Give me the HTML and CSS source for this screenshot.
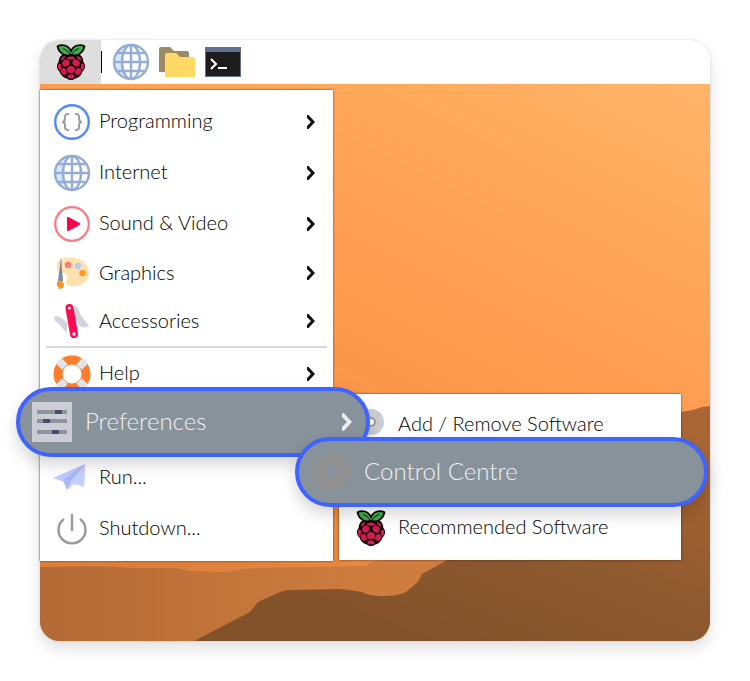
FILE: index.html
```html
<!DOCTYPE html>
<html lang="en">
<head>
  <meta charset="UTF-8" />
  <meta name="viewport" content="width=device-width, initial-scale=1" />
  <title>Control Centre</title>
  <link rel="stylesheet" href="styles.css">
</head>
<body>
  <!-- shared icons -->
  <svg class="sprite" aria-hidden="true">
    <symbol id="raspberry" viewBox="0 0 32 40">
      <path d="M16 9C12 8 9 9 7 12C4 14 3 17 3 20C0 23 1 28 4 30C5 34 9 37 12 37.500C14 39.500 18 39.500 20 37.500C24 37 27 34 28 30C31 28 32 23 29 20C29 17 28 14 25 12C23 9 20 8 16 9Z" fill="#0b0205"/>
      <path d="M15.500 12.500C9 14.500 3 10 1.800 3.500C6 1 14 2 16 9C18 2 26 1 30.200 3.500C29 10 23 14.500 16.500 12.500Z" fill="#3fae49" stroke="#0b0205" stroke-width="1.800" stroke-linejoin="round"/>
      <path d="M8 6C11 7 13 9 15.500 12M24 6C21 7 19 9 16.500 12" fill="none" stroke="#0b0205" stroke-width="1"/>
      <g fill="#d01c50">
        <path d="M11.500 16.200C13 13.500 19 13.500 20.500 16.200C18 18 14 18 11.500 16.200Z"/>
        <path d="M5 18.500C5 16 7 14 9.500 13.800C10.500 15.500 8 18.500 5 18.500Z"/>
        <path d="M27 18.500C27 16 25 14 22.500 13.800C21.500 15.500 24 18.500 27 18.500Z"/>
        <ellipse cx="10.600" cy="21" rx="4" ry="3.500" transform="rotate(-35 10.600 21)"/>
        <ellipse cx="21.400" cy="21" rx="4" ry="3.500" transform="rotate(35 21.400 21)"/>
        <ellipse cx="16" cy="28" rx="4.200" ry="3.800"/>
        <ellipse cx="3.900" cy="25" rx="1.800" ry="3.300"/>
        <ellipse cx="28.100" cy="25" rx="1.800" ry="3.300"/>
        <ellipse cx="8.400" cy="30" rx="3.100" ry="3.700" transform="rotate(-30 8.400 30)"/>
        <ellipse cx="23.600" cy="30" rx="3.100" ry="3.700" transform="rotate(30 23.600 30)"/>
        <ellipse cx="16" cy="35.200" rx="3.800" ry="2.200"/>
      </g>
    </symbol>
    <symbol id="globe" viewBox="0 0 38 38">
      <circle cx="19" cy="19" r="17" fill="#fff"/>
      <path d="M19 2A17 17 0 0 0 19 36C8 30 8 8 19 2Z" fill="#d8e8fb"/>
      <g fill="none" stroke="#94acd6" stroke-width="2.400">
        <circle cx="19" cy="19" r="17"/>
        <ellipse cx="19" cy="19" rx="9" ry="17"/>
        <path d="M19 2V36M2 19H36M5 10H33M5 28H33"/>
      </g>
    </symbol>
    <symbol id="chevron" viewBox="0 0 8 14">
      <path d="M0 0H1.500L8 7L1.500 14H0V11L4 7L0 3Z" fill="currentColor"/>
    </symbol>
  </svg>

  <main class="desktop">
    <header class="taskbar">
      <button class="task start" aria-label="Menu"><svg class="berry"><use href="#raspberry"/></svg></button>
      <span class="cursor"></span>
      <button class="task" aria-label="Web browser"><svg class="icon"><use href="#globe"/></svg></button>
      <button class="task" aria-label="Files">
        <svg class="icon" viewBox="0 0 38 38">
          <path d="M1 6Q1 4 3 4H12L16 8H29Q31 8 31 10V29H1Z" fill="#9c8c66"/>
          <path d="M7 12Q7 10 9 10H18L22 14H35Q37 14 37 16V34H7Z" fill="#ffd966"/>
        </svg>
      </button>
      <button class="task" aria-label="Terminal">
        <svg class="icon" viewBox="0 0 38 38">
          <path d="M1 4H37V34H1Z" fill="#61718f"/>
          <path d="M2 9H36V33H2Z" fill="#1d1d1d"/>
          <path d="M7 16L12 21L7 26M14 25H23" fill="none" stroke="#fff" stroke-width="2"/>
        </svg>
      </button>
    </header>

    <div class="wallpaper">
      <svg class="scenery" viewBox="0 0 670 557" preserveAspectRatio="none" aria-hidden="true">
        <defs>
          <linearGradient id="sky" x1="1" y1="0" x2="0.400" y2="1">
            <stop offset="0" stop-color="#ffb46a"/>
            <stop offset="0.200" stop-color="#feab5b"/>
            <stop offset="0.400" stop-color="#ff9f53"/>
            <stop offset="0.650" stop-color="#fa9549"/>
            <stop offset="1" stop-color="#dd7f3b"/>
          </linearGradient>
          <linearGradient id="ridge">
            <stop offset="0" stop-color="#b36a36"/>
            <stop offset="0.800" stop-color="#cf7d3e"/>
          </linearGradient>
          <linearGradient id="hill" x1="0.300" y1="1" x2="1" y2="0.200">
            <stop offset="0" stop-color="#82522b"/>
            <stop offset="0.500" stop-color="#8d592f"/>
            <stop offset="1" stop-color="#a96534"/>
          </linearGradient>
        </defs>
        <path d="M0 0H670V557H0Z" fill="url(#sky)"/>
        <path d="M0 483L58 482L95 484L137 484L150 487L185 488L213 484L326 482L333 477L420 470V557H0Z" fill="url(#ridge)"/>
        <path d="M154 557L210 528L218 518L240 508L247 506L302 505L322 508Q328 512 343 512Q358 512 366 508L378 498L382 490L407 476L500 400L641 328L653 326L662 323L670 322V557Z" fill="url(#hill)"/>
      </svg>

      <nav class="menu" aria-label="Applications">
        <ul class="list">
          <li><a href="#programming" class="row">
            <svg class="icon" viewBox="0 0 38 38">
              <circle cx="19" cy="19" r="16.800" fill="#fff" stroke="#548bfb" stroke-width="2.400"/>
              <path d="M16 11H15Q12 11 12 14V16Q12 19 9 19Q12 19 12 22V24Q12 27 15 27H16M22 11H23Q26 11 26 14V16Q26 19 29 19Q26 19 26 22V24Q26 27 23 27H22" fill="none" stroke="#9b9fa6" stroke-width="2"/>
            </svg>
            <span class="label">Programming</span><svg class="chevron"><use href="#chevron"/></svg></a></li>
          <li><a href="#internet" class="row">
            <svg class="icon"><use href="#globe"/></svg>
            <span class="label">Internet</span><svg class="chevron"><use href="#chevron"/></svg></a></li>
          <li><a href="#sound" class="row">
            <svg class="icon" viewBox="0 0 38 38">
              <circle cx="19" cy="19" r="16.800" fill="#fff" stroke="#fb7b80" stroke-width="2.200"/>
              <path d="M15 13L26 19L15 25Z" fill="#ff004e" stroke="#ff004e" stroke-width="2" stroke-linejoin="round"/>
            </svg>
            <span class="label">Sound &amp; Video</span><svg class="chevron"><use href="#chevron"/></svg></a></li>
          <li><a href="#graphics" class="row short">
            <svg class="icon" viewBox="0 0 38 38">
              <path d="M8 5C17 1 36 4 36 19C36 29 27 33 18 32C12 31 12 28 14 25C16 21 11 18 8 19C2 16 2 8 8 5Z" fill="#ffe1ad"/>
              <circle cx="15" cy="11" r="3.200" fill="#f87c80"/>
              <circle cx="25" cy="12" r="3.200" fill="#b5ccf6"/>
              <circle cx="29.500" cy="19" r="3.200" fill="#ff9a28"/>
              <path d="M8 3L10 27H5Z" fill="#7c8ba3"/>
              <path d="M4 28Q7 25 10 28L11 31Q10 35 6 35Q6 33 4 32Z" fill="#ff9122"/>
            </svg>
            <span class="label">Graphics</span><svg class="chevron"><use href="#chevron"/></svg></a></li>
          <li><a href="#accessories" class="row short">
            <svg class="icon" viewBox="0 0 38 38">
              <path d="M1 15L5 14L14 20V31L6 22L2 19ZM22 3Q26 6 27 12L36 24Q31 27 27 24L20 15Z" fill="#d2d4dc"/>
              <path d="M16.500 6L21 32" stroke="#ff0950" stroke-width="8" stroke-linecap="round"/>
              <circle cx="16.500" cy="6" r="1.500" fill="#fff"/>
              <circle cx="21" cy="32" r="1.700" fill="#fff"/>
            </svg>
            <span class="label">Accessories</span><svg class="chevron"><use href="#chevron"/></svg></a></li>
          <li class="separator"></li>
          <li><a href="#help" class="row">
            <svg class="icon" viewBox="0 0 38 38">
              <circle cx="19" cy="19" r="14" fill="none" stroke="#ff7d2b" stroke-width="9"/>
              <path d="M6 6L12 12M26 26L32 32M32 6L26 12M6 32L12 26" stroke="#e1e5ee" stroke-width="8"/>
            </svg>
            <span class="label">Help</span><svg class="chevron"><use href="#chevron"/></svg></a></li>
          <li class="active">
            <button class="pill pill-menu" aria-expanded="true">
              <svg class="big-icon" viewBox="0 0 42 42">
                <path d="M1 1H41V41H1Z" fill="#cdced5"/>
                <path d="M6 11H36M6 20H36M6 31H36" stroke="#8e949d" stroke-width="4"/>
                <path d="M24 11H31M12 20H19M21 31H28" stroke="#444d6b" stroke-width="4"/>
              </svg>
              <span class="label">Preferences</span><svg class="chevron"><use href="#chevron"/></svg></button>
            <div class="submenu">
              <ul class="list">
                <li><a href="#software" class="row">
                  <svg class="icon" viewBox="0 0 38 38">
                    <circle cx="19" cy="16" r="9" fill="none" stroke="#cdcdd3" stroke-width="8"/>
                    <circle cx="19" cy="16" r="4" fill="#fff" stroke="#96979c" stroke-width="2"/>
                  </svg>
                  <span class="label">Add / Remove Software</span></a></li>
                <li class="active">
                  <button class="pill pill-sub">
                    <svg class="big-icon" viewBox="0 0 42 42">
                      <circle cx="21" cy="21" r="11.500" fill="none" stroke="#919191" stroke-width="10"/>
                      <path d="M17 6L18 1Q21 -1 24 1L25 6ZM17 36L18 41Q21 43 24 41L25 36ZM6 17L1 18Q-1 21 1 24L6 25ZM36 17L41 18Q43 21 41 24L36 25ZM7 13L5 9Q6 5 9 5L13 7ZM29 7L33 5Q36 5 37 9L35 13ZM7 29L5 33Q6 37 9 37L13 35ZM29 35L33 37Q36 37 37 33L35 29Z" fill="#919191" stroke="#919191"/>
                    </svg>
                    <span class="label">Control Centre</span></button>
                </li>
                <li><a href="#recommended" class="row">
                  <svg class="berry"><use href="#raspberry"/></svg>
                  <span class="label">Recommended Software</span></a></li>
              </ul>
            </div>
          </li>
          <li><a href="#run" class="row">
            <svg class="icon" viewBox="0 0 38 38">
              <path d="M0 19L32 5L15 24Z" fill="#bccafe"/>
              <path d="M32 5L31 28L20 23Z" fill="#c9d4ff"/>
              <path d="M32 5L10 21L14 31L20 23Z" fill="#a9b6f8"/>
              <path d="M32 5L18 22L14 31L21 25L31 28Z" fill="#c4d0ff"/>
            </svg>
            <span class="label">Run...</span></a></li>
          <li><a href="#shutdown" class="row">
            <svg class="icon" viewBox="0 0 38 38">
              <path d="M11 9A13.500 13.500 0 1 0 27 9M19 4V21" fill="none" stroke="#9a9a9a" stroke-width="2.400"/>
            </svg>
            <span class="label">Shutdown...</span></a></li>
        </ul>
      </nav>
    </div>
  </main>
</body>
</html>
```

FILE: styles.css
```css
* {
  box-sizing: border-box;
}
body {
  margin: 0;
  padding: 40px;
  background: #fff;
  font-family: Lato, "Open Sans", sans-serif;
  font-size: 20px;
  line-height: 24px;
  color: #000;
}
button {
  font: inherit;
  border: none;
  background: none;
  padding: 0;
}
.sprite {
  position: absolute;
  width: 0;
  height: 0;
}
.desktop {
  border-radius: 20px;
  box-shadow: 0 8px 16px rgba(0, 0, 0, 0.12), 0 0 2px rgba(0, 0, 0, 0.2);
}

/* top bar */
.taskbar {
  display: flex;
  align-items: center;
  gap: 8px;
  height: 44px;
  background: #fff;
  border-radius: 20px 20px 0 0;
}
.task {
  display: flex;
  align-items: center;
  justify-content: center;
}
.start {
  width: 61px;
  height: 44px;
  background: #dedede;
  border-radius: 20px 0 0 0;
}
.cursor {
  width: 1px;
  height: 22px;
  margin: 0 2px 0 -8px;
  background: #000;
}
.icon {
  width: 38px;
  height: 38px;
  flex: none;
}
.berry {
  width: 38px;
  height: 38px;
  flex: none;
}

.wallpaper {
  position: relative;
  padding: 6px 0 80px;
}
.scenery {
  position: absolute;
  inset: 0;
  width: 100%;
  height: 100%;
  border-radius: 0 0 20px 20px;
}

/* menus */
.menu {
  position: relative;
  width: 293px;
  padding: 6px 0 7px;
  background: #fff;
  box-shadow: 0 0 2px rgba(60, 20, 0, 0.8);
}
.list {
  list-style: none;
  margin: 0;
  padding: 0;
}
.row {
  display: flex;
  align-items: center;
  gap: 8px;
  height: 51px;
  padding: 0 18px 0 13px;
  color: inherit;
  text-decoration: none;
  font-weight: 300;
}
.label {
  padding-bottom: 3px;
}
.short {
  height: 48px;
}
.chevron {
  width: 8px;
  height: 14px;
  margin-left: auto;
  color: #111;
}
.separator {
  height: 2px;
  margin: 1px 6px 0;
  background: #d9d9d9;
}
.active {
  position: relative;
  height: 53px;
}
.submenu {
  position: absolute;
  top: -5px;
  left: 299px;
  width: 342px;
  padding: 5px 0 7px;
  background: #fff;
  box-shadow: 0 0 2px rgba(60, 20, 0, 0.8);
}
.submenu .active {
  height: 52px;
}

/* highlighted entries */
.pill {
  position: absolute;
  display: flex;
  align-items: center;
  gap: 12px;
  height: 70px;
  border: 4px solid #3f63ff;
  border-radius: 35px;
  background: #88929b;
  color: #f0f0f0;
  font-size: 24px;
  font-weight: 300;
  box-shadow: 0 8px 16px rgba(0, 0, 0, 0.16);
}
.pill .chevron {
  width: 10px;
  height: 18px;
  color: #eee;
}
.pill-menu {
  top: -12px;
  left: -24px;
  width: 354px;
  padding: 0 14px 0 11px;
  z-index: 1;
}
.pill-sub {
  top: -13px;
  left: -44px;
  width: 413px;
  padding: 0 11px;
  z-index: 2;
}
.big-icon {
  width: 42px;
  height: 42px;
  flex: none;
}
```
